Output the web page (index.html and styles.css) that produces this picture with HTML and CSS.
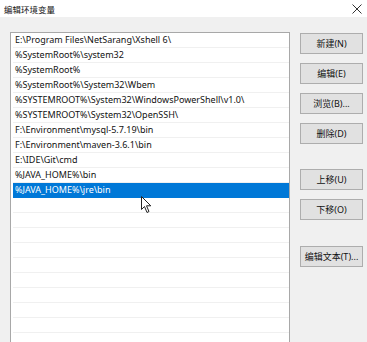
FILE: index.html
```html
<!DOCTYPE html>
<html lang="zh">
<head>
<meta charset="utf-8">
<title>编辑环境变量</title>
<link rel="stylesheet" href="styles.css">
</head>
<body>
<div class="window">
  <div class="titlebar">
    <span class="title">编辑环境变量</span>
    <svg class="close" width="10" height="10" viewBox="0 0 10 10"><path d="M0.5 0.5 L9.5 9.5 M9.5 0.5 L0.5 9.5" stroke="#333" stroke-width="1" fill="none"/></svg>
  </div>
  <div class="content">
    <div class="list">
      <div class="row">E:\Program Files\NetSarang\Xshell 6\</div>
      <div class="row">%SystemRoot%\system32</div>
      <div class="row">%SystemRoot%</div>
      <div class="row">%SystemRoot%\System32\Wbem</div>
      <div class="row">%SYSTEMROOT%\System32\WindowsPowerShell\v1.0\</div>
      <div class="row">%SYSTEMROOT%\System32\OpenSSH\</div>
      <div class="row">F:\Environment\mysql-5.7.19\bin</div>
      <div class="row">F:\Environment\maven-3.6.1\bin</div>
      <div class="row">E:\IDE\Git\cmd</div>
      <div class="row">%JAVA_HOME%\bin</div>
      <div class="row selected">%JAVA_HOME%\jre\bin</div>
      <div class="row"></div>
      <div class="row"></div>
      <div class="row"></div>
      <div class="row"></div>
      <div class="row"></div>
      <div class="row"></div>
      <div class="row"></div>
      <div class="row"></div>
      <div class="row"></div>
    </div>
    <div class="buttons">
      <button class="btn">新建(N)</button>
      <button class="btn">编辑(E)</button>
      <button class="btn">浏览(B)...</button>
      <button class="btn">删除(D)</button>
      <button class="btn group">上移(U)</button>
      <button class="btn">下移(O)</button>
      <button class="btn group2">编辑文本(T)...</button>
    </div>
  </div>
  <svg class="cursor" width="12" height="18" viewBox="0 0 12 18"><path d="M0.5 0.5 L0.5 13.5 L3.5 10.5 L6 16.5 L8 15.5 L5.5 9.8 L9.8 9.8 Z" fill="#fff" stroke="#222" stroke-width="1" stroke-linejoin="miter"/></svg>
</div>
</body>
</html>
```
FILE: styles.css
```css
html, body {
  margin: 0;
  padding: 0;
  background: #f0f0f0;
  overflow: hidden;
}
.window {
  position: relative;
  width: 367px;
  height: 342px;
  overflow: hidden;
  font-family: "Noto Sans", "Noto Sans CJK SC", sans-serif;
  font-size: 9px;
  color: #000;
}
.titlebar {
  height: 17px;
  background: #fff;
  display: flex;
  align-items: center;
  justify-content: space-between;
  padding: 0 5px 0 4px;
}
.title {
  font-size: 8.5px;
  color: #111;
}
.close {
  display: block;
  margin-right: 0;
}
.content {
  display: flex;
  align-items: flex-start;
  padding: 15px 0 0 10px;
}
.list {
  width: 276px;
  height: 320px;
  border: 1px solid #a8a8a8;
  padding: 0 0 0 2px;
  background: #fff;
  display: flex;
  flex-direction: column;
}
.row {
  flex: none;
  height: 14px;
  line-height: 14px;
  border-bottom: 1px solid #f0f0f0;
  padding-left: 2px;
  white-space: nowrap;
  overflow: hidden;
  color: #111;
}
.row.selected {
  background: #0078d7;
  border-bottom-color: #0078d7;
  color: #fff;
}
.buttons {
  display: flex;
  flex-direction: column;
  gap: 9px;
  margin-left: 10px;
  padding-top: 1px;
}
.btn {
  width: 63px;
  height: 21px;
  margin: 0;
  padding: 0;
  background: #e1e1e1;
  border: 1px solid #adadad;
  font-family: "Noto Sans", "Noto Sans CJK SC", sans-serif;
  font-size: 9px;
  color: #111;
}
.btn.group {
  margin-top: 16px;
}
.btn.group2 {
  margin-top: 17px;
}
.cursor {
  position: absolute;
  left: 141px;
  top: 196px;
}
```
